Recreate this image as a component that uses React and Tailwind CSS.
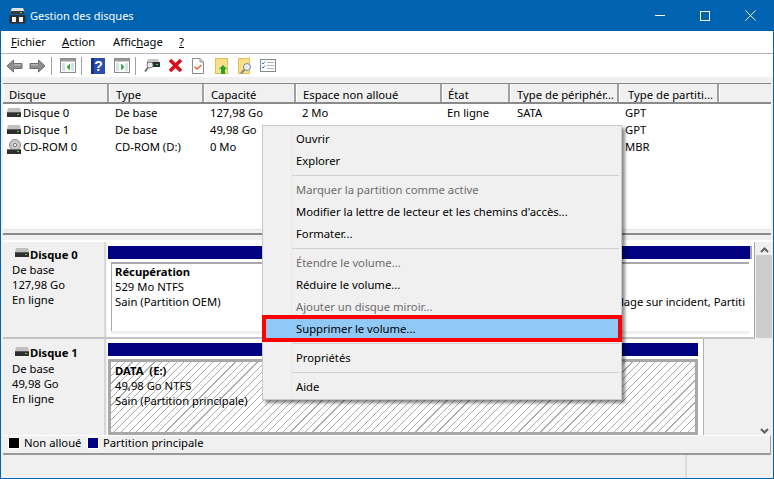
const disabled = "text-[#6d6d6d]";

function DiskIcon({ className = "" }) {
  return (
    <svg width="16" height="12" viewBox="0 0 16 12" className={className}>
      <path d="M2 1h12l1 4H1z" fill="#c0c0c0" />
      <rect x="1" y="5" width="14" height="5" fill="#2f2f2f" />
      <rect x="1" y="5" width="14" height="1" fill="#5a5a5a" />
      <rect x="11" y="7" width="2" height="1" fill="#35e04a" />
    </svg>
  );
}

function CdIcon() {
  return (
    <svg width="16" height="16" viewBox="0 0 16 16">
      <circle cx="9" cy="6" r="5.5" fill="#c8c8c8" stroke="#8c8c8c" />
      <circle cx="9" cy="6" r="1.6" fill="#fff" stroke="#777" />
      <rect x="1" y="10" width="14" height="5" fill="#2f2f2f" />
      <rect x="1" y="10" width="14" height="1" fill="#707070" />
      <rect x="11" y="12" width="2" height="1" fill="#35e04a" />
    </svg>
  );
}

function TitleIcon() {
  return (
    <svg width="17" height="16" viewBox="0 0 17 16">
      <path d="M3 0h11l1.5 4H1.5z" fill="#e2e2e2" />
      <rect x="2" y="3" width="13" height="3" fill="#3a3a3a" />
      <rect x="11" y="4" width="2" height="1" fill="#45e060" />
      <rect x="0.5" y="7" width="16" height="8.5" rx="1" fill="#2e2e2e" />
      <rect x="3" y="9" width="4" height="5" fill="#f2f2f2" />
      <rect x="10" y="9" width="4" height="5" fill="#f2f2f2" />
    </svg>
  );
}

function Arrow({ flip }) {
  return (
    <svg width="17" height="14" viewBox="0 0 17 14" className={flip ? "-scale-x-100" : ""}>
      <path d="M1 7 7.5 1v3.5H16v5H7.5V13z" fill="#8d8d8d" stroke="#6f6f6f" />
      <path d="M8 5h7v1.5H8z" fill="#b5b5b5" />
    </svg>
  );
}

function Sep() {
  return <div className="w-px h-[18px] bg-[#a0a0a0]" />;
}

function PaneIcon({ right }) {
  return (
    <svg width="16" height="15" viewBox="0 0 16 15">
      <rect x="0.5" y="0.5" width="15" height="14" fill="#fff" stroke="#8a8a8a" />
      <rect x="1" y="1" width="14" height="2.5" fill="#9a9a9a" />
      <rect x="2" y="5" width="3" height="8" fill="#d5e0ea" />
      <rect x="11" y="5" width="3" height="8" fill="#d5e0ea" />
      {right ? (
        <path d="M7 5.5 10.5 9 7 12.5z" fill="#2fae3a" />
      ) : (
        <path d="M10 5.5 6.5 9 10 12.5z" fill="#2fae3a" />
      )}
    </svg>
  );
}

function HelpIcon() {
  return (
    <svg width="14" height="16" viewBox="0 0 14 16">
      <rect x="0" y="0" width="14" height="16" fill="#2a4fb0" />
      <rect x="0" y="0" width="3" height="16" fill="#1c2f80" />
      <text x="7.5" y="13" fontSize="14" fontWeight="700" fill="#fff" textAnchor="middle" fontFamily="Liberation Sans, sans-serif">?</text>
    </svg>
  );
}

function DiskGlass() {
  return (
    <svg width="16" height="15" viewBox="0 0 16 15">
      <path d="M4 1h10l1 3H3z" fill="#c4c4c4" />
      <rect x="3" y="4" width="13" height="5" fill="#2f2f2f" />
      <rect x="12" y="6" width="2" height="1" fill="#35e04a" />
      <circle cx="6" cy="7" r="3" fill="#dfeaf3" stroke="#8a8a8a" />
      <path d="M4 9.5 1 13.5" stroke="#6f6f6f" strokeWidth="2" />
    </svg>
  );
}

function RedX() {
  return (
    <svg width="15" height="15" viewBox="0 0 15 15">
      <path d="M2 2 13 13M13 2 2 13" stroke="#d90f1c" strokeWidth="3.6" />
    </svg>
  );
}

function DocCheck() {
  return (
    <svg width="12" height="16" viewBox="0 0 12 16">
      <path d="M0.5 0.5H8L11.5 4V15.5H0.5z" fill="#fff" stroke="#8c8c8c" />
      <path d="M8 0.5V4H11.5" fill="none" stroke="#8c8c8c" />
      <path d="M2.5 8.5 5 11l4.5-4" fill="none" stroke="#e8622c" strokeWidth="1.4" />
    </svg>
  );
}

function FolderUp() {
  return (
    <svg width="13" height="16" viewBox="0 0 13 16">
      <rect x="0.5" y="0.5" width="12" height="15" fill="#fbe08c" stroke="#e2c24e" />
      <path d="M8 7 12 11H10V16H6V11H4z" fill="#22a52c" />
    </svg>
  );
}

function DocGlass() {
  return (
    <svg width="14" height="16" viewBox="0 0 14 16">
      <rect x="0.5" y="0.5" width="11" height="15" fill="#fbe08c" stroke="#e2c24e" />
      <circle cx="9" cy="9" r="3.5" fill="#e3eef6" stroke="#7f8a94" />
      <path d="M6.5 11.5 3 15.5" stroke="#7f8a94" strokeWidth="2" />
    </svg>
  );
}

function ListIcon() {
  return (
    <svg width="16" height="13" viewBox="0 0 16 13">
      <rect x="0.5" y="0.5" width="15" height="12" fill="#fff" stroke="#8a8a8a" />
      <path d="M2 4 3 5 5 2.5M2 8 3 9 5 6.5" fill="none" stroke="#2a7fd4" />
      <path d="M7 3.5h7M7 6.5h7M7 9.5h7" stroke="#b5b5b5" />
    </svg>
  );
}

const columns = [
  ["Disque", "w-[106px]", "pl-[5px]"],
  ["Type", "w-[95px]", "pl-[6px]"],
  ["Capacité", "w-[92px]", "pl-[6px]"],
  ["Espace non alloué", "w-[146px]", "pl-[6px]"],
  ["État", "w-[68px]", "pl-[5px]"],
  ["Type de périphér...", "w-[109px]", "pl-[6px]"],
  ["Type de partiti...", "w-[100px]", "pl-[8px]"],
  ["", "w-[52px]", ""],
];

const rows = [
  [<DiskIcon />, "Disque 0", "De base", "127,98 Go", "2 Mo", "En ligne", "SATA", "GPT"],
  [<DiskIcon />, "Disque 1", "De base", "49,98 Go", "", "", "", "GPT"],
  [<CdIcon />, "CD-ROM 0", "CD-ROM (D:)", "0 Mo", "", "", "", "MBR"],
];

function MenuItem({ children, off, className = "" }) {
  return (
    <div className={`h-[22px] flex items-center pl-[33px] ${off ? disabled : "text-black"} ${className}`}>
      {children}
    </div>
  );
}

function MenuSep() {
  return (
    <div className="h-[7px] flex items-center pl-[28px] pr-[2px]">
      <div className="h-px w-full bg-[#d0d0d0]" />
    </div>
  );
}

function DiskLabel({ name, size, top, head }) {
  return (
    <div className={`w-[103px] shrink-0 ${top} border-r-2 border-r-[#d8d8d8] leading-[15px]`}>
      <div className={`flex items-center font-bold ${head} pl-[11px]`}>
        <DiskIcon className="mr-0 -mt-[2px]" />
        <span>{name}</span>
      </div>
      <div className="pl-[9px]">De base</div>
      <div className="pl-[9px]">{size}</div>
      <div className="pl-[9px]">En ligne</div>
    </div>
  );
}

export default function App() {
  return (
    <div className="relative w-[774px] h-[479px] overflow-hidden flex flex-col border-x border-b border-[#0063b1] bg-[#f0f0f0] text-[11.25px] leading-[16px] text-black font-['Noto_Sans',sans-serif]">
      {/* Title bar */}
      <div className="h-[31px] shrink-0 bg-[#0063b1] flex items-center text-white">
        <div className="ml-[8px] mr-[4px] flex"><TitleIcon /></div>
        <span className="flex-1 text-[11px]">Gestion des disques</span>
        <div className="w-[10px] h-px bg-white mr-[35px]" />
        <div className="w-[10px] h-[10px] border border-white mr-[35px]" />
        <svg width="11" height="11" viewBox="0 0 11 11" className="mr-[17px]">
          <path d="M.5.5l10 10M10.5.5l-10 10" stroke="#fff" />
        </svg>
      </div>

      {/* Menu bar */}
      <div className="h-[23px] shrink-0 bg-white border-b border-[#b4b4c4] flex items-center pl-[10px]">
        <span className="w-[51px]"><u>F</u>ichier</span>
        <span className="w-[51px]"><u>A</u>ction</span>
        <span className="w-[66px]">Affic<u>h</u>age</span>
        <span><u>?</u></span>
      </div>

      {/* Toolbar */}
      <div className="h-[23px] shrink-0 bg-white flex items-center pl-[5px]">
        <Arrow />
        <div className="w-[6px]" />
        <Arrow flip />
        <div className="w-[5px]" />
        <Sep />
        <div className="w-[8px]" />
        <PaneIcon />
        <div className="w-[5px]" />
        <Sep />
        <div className="w-[9px]" />
        <HelpIcon />
        <div className="w-[9px]" />
        <PaneIcon right />
        <div className="w-[5px]" />
        <Sep />
        <div className="w-[8px]" />
        <DiskGlass />
        <div className="w-[8px]" />
        <RedX />
        <div className="w-[9px]" />
        <DocCheck />
        <div className="w-[11px]" />
        <FolderUp />
        <div className="w-[10px]" />
        <DocGlass />
        <div className="w-[8px]" />
        <ListIcon />
      </div>

      <div className="h-[6px] shrink-0 bg-[#f0f0f0]" />

      {/* Volume list */}
      <div className="mx-[2px] shrink-0 border-t border-[#8a8a8a]">
        <div className="flex h-[20px] bg-[#f0f0f0] border-b-2 border-b-[#8a8a8a]">
          {columns.map(([label, w, pad], i) => (
            <div
              key={i}
              className={`${w} ${pad} pt-[3px] shrink-0 flex items-center whitespace-nowrap border-l border-l-white border-r-2 border-r-[#a0a0a0] last:border-r-0`}
            >
              {label}
            </div>
          ))}
        </div>
        <div className="h-[125px] bg-white">
          {rows.map((r, i) => (
            <div key={i} className="h-[17px] flex items-center whitespace-nowrap">
              <div className="w-[106px] flex items-center pl-[3px]">
                <span className="w-[17px] flex">{r[0]}</span>
                {r[1]}
              </div>
              <div className="w-[95px] pl-[6px]">{r[2]}</div>
              <div className="w-[92px] pl-[6px]">{r[3]}</div>
              <div className="w-[146px] pl-[6px]">{r[4]}</div>
              <div className="w-[68px] pl-[5px]">{r[5]}</div>
              <div className="w-[109px] pl-[7px]">{r[6]}</div>
              <div className="pl-[6px]">{r[7]}</div>
            </div>
          ))}
        </div>
        <div className="h-[4px] bg-[#f0f0f0] border-t border-[#e4e4e4]" />
        <div className="h-[2px] bg-[#8a8a8a]" />
      </div>

      <div className="h-[5px] shrink-0" />

      {/* Graphic view */}
      <div className="ml-[2px] flex h-[195px] shrink-0 border-t-2 border-t-white">
        <div className="w-[752px] shrink-0 flex flex-col">
          {/* Disk 0 */}
          <div className="flex h-[97px] border-b-2 border-b-[#c4c4c4]">
            <DiskLabel name="Disque 0" size="127,98 Go" top="pt-[4px]" head="h-[16px]" />
            <div className="flex-1 min-w-0 ml-[1px] pt-[4px] pr-[2px] pb-[3px] pl-[1px] bg-white border-r border-r-[#a8a8a8] flex flex-col">
              <div className="h-[13px] shrink-0 bg-[#000080] border-r-2 border-r-[#a8a8a8]" />
              <div className="flex-1 min-h-0 flex mt-[3px] mx-[3px] mb-0 bg-[#f0f0f0] pb-[3px]">
                <div className="w-[200px] shrink-0 bg-white border-l border-t-2 border-[#a8a8a8] pl-[3px] leading-[15px]">
                  <div className="font-bold">Récupération</div>
                  <div>529 Mo NTFS</div>
                  <div>Sain (Partition OEM)</div>
                </div>
                <div className="flex-1 min-w-0 overflow-hidden bg-white border-t-2 border-[#a8a8a8] pt-[30px] pr-[4px] leading-[15px] tracking-[-0.05px] flex justify-end whitespace-nowrap">
                  lage sur incident, Partiti
                </div>
              </div>
            </div>
          </div>
          {/* Disk 1 */}
          <div className="flex h-[96px]">
            <DiskLabel name="Disque 1" size="49,98 Go" top="pt-[5px]" head="h-[17px]" />
            <div className="w-[597px] shrink-0 ml-[1px] pt-[4px] pl-[1px] pr-[5px] border-r border-r-[#b0b0b0] flex flex-col bg-white">
              <div className="h-[13px] shrink-0 bg-[#000080]" />
              <div className="flex-1 mt-[3px] border-[3px] border-[#a8a8a8] pl-[4px] pt-[1px] leading-[15px] bg-[repeating-linear-gradient(135deg,#ffffff_0px,#ffffff_4.4px,#acacac_4.4px,#acacac_5.2px)]">
                <div className="font-bold">DATA&nbsp; (E:)</div>
                <div>49,98 Go NTFS</div>
                <div>Sain (Partition principale)</div>
              </div>
            </div>
          </div>
        </div>
        {/* Scrollbar */}
        <div className="w-[16px] shrink-0 ml-[1px] flex flex-col items-center bg-[#f0f0f0]">
          <div className="h-[11px] flex items-end">
            <svg width="9" height="6" viewBox="0 0 9 6"><path d="M1 5 4.5 1.5 8 5" fill="none" stroke="#606060" strokeWidth="2" /></svg>
          </div>
          <div className="w-full h-[83px] mt-[2px] bg-[#cdcdcd]" />
          <div className="flex-1 flex items-end pb-[1px]">
            <svg width="9" height="6" viewBox="0 0 9 6"><path d="M1 1 4.5 4.5 8 1" fill="none" stroke="#606060" strokeWidth="2" /></svg>
          </div>
        </div>
      </div>

      {/* Legend */}
      <div className="ml-[2px] mr-[2px] h-[20px] shrink-0 flex items-center border-t border-t-white border-b-2 border-b-[#9a9a9a] border-r border-r-[#a0a0a0] whitespace-nowrap pl-[5px] pb-[4px]">
        <span className="w-[12px] h-[12px] bg-black border border-white" />
        <span className="ml-[4px] w-[63px]">Non alloué</span>
        <span className="w-[12px] h-[12px] bg-[#000080] border border-white" />
        <span className="ml-[4px]">Partition principale</span>
      </div>

      {/* Status bar */}
      <div className="flex-1 flex justify-end">
        <div className="w-[88px] border-l-2 border-l-[#dcdcdc]" />
      </div>

      {/* Context menu */}
      <div className="absolute left-[261px] top-[125px] w-[360px] h-[275px] bg-[#f0f0f0] border border-[#c8c8c8] shadow-[3px_3px_3px_rgba(0,0,0,0.45)] py-[2px] whitespace-nowrap">
        <div className="absolute left-[28px] top-0 bottom-0 w-px bg-[#e8e8e8]" />
        <MenuItem>Ouvrir</MenuItem>
        <MenuItem>Explorer</MenuItem>
        <MenuSep />
        <MenuItem off>Marquer la partition comme active</MenuItem>
        <MenuItem>Modifier la lettre de lecteur et les chemins d'accès...</MenuItem>
        <MenuItem>Formater...</MenuItem>
        <MenuSep />
        <MenuItem off>Étendre le volume...</MenuItem>
        <MenuItem>Réduire le volume...</MenuItem>
        <MenuItem off>Ajouter un disque miroir...</MenuItem>
        <div className="relative h-[22px] flex items-center pl-[33px]">
          <div className="absolute left-[-1px] right-[-1px] top-[-3px] bottom-[-2px] bg-[#90c8f6] border-4 border-[#ff0000]" />
          <span className="relative">Supprimer le volume...</span>
        </div>
        <MenuSep />
        <MenuItem>Propriétés</MenuItem>
        <MenuSep />
        <MenuItem>Aide</MenuItem>
      </div>
    </div>
  );
}
